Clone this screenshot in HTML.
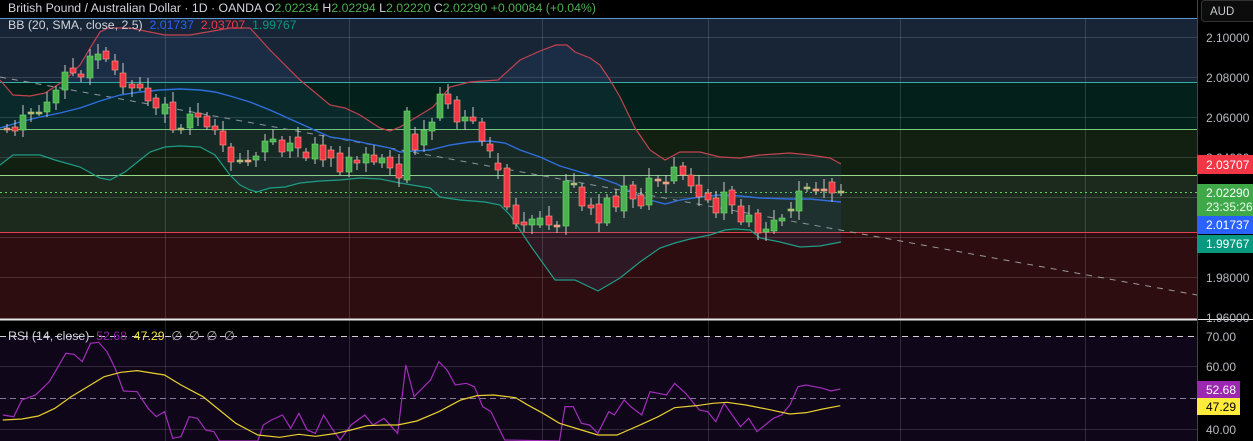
<!DOCTYPE html>
<html><head><meta charset="utf-8"><style>
html,body{margin:0;padding:0;background:#000;width:1253px;height:441px;overflow:hidden;font-family:"Liberation Sans",sans-serif}
svg{position:absolute;left:0;top:0}
</style></head><body>
<svg id="s" width="1253" height="441" xmlns="http://www.w3.org/2000/svg" font-family="Liberation Sans, sans-serif">
<rect x="0" y="0" width="1197" height="18" fill="#000"/>
<rect x="0" y="18" width="1197" height="64" fill="#172536"/>
<rect x="0" y="82" width="1197" height="47" fill="#04201a"/>
<rect x="0" y="129" width="1197" height="46" fill="#122012"/>
<rect x="0" y="175" width="1197" height="57" fill="#1c2a1e"/>
<rect x="0" y="232" width="1197" height="87" fill="#2d0d10"/>
<rect x="0" y="320" width="1197" height="16" fill="#000"/>
<rect x="0" y="336" width="1197" height="105" fill="#10061a"/>
<g stroke="#ffffff" stroke-opacity="0.14" stroke-width="1">
<line x1="0" y1="37.5" x2="1197" y2="37.5"/><line x1="0" y1="77.5" x2="1197" y2="77.5"/>
<line x1="0" y1="117.5" x2="1197" y2="117.5"/><line x1="0" y1="157.5" x2="1197" y2="157.5"/>
<line x1="0" y1="197.5" x2="1197" y2="197.5"/><line x1="0" y1="237.5" x2="1197" y2="237.5"/>
<line x1="0" y1="277.5" x2="1197" y2="277.5"/>
<line x1="0" y1="366.5" x2="1197" y2="366.5"/><line x1="0" y1="429.5" x2="1197" y2="429.5"/>
<line x1="165.5" y1="18" x2="165.5" y2="441"/><line x1="349.5" y1="18" x2="349.5" y2="441"/>
<line x1="542.5" y1="18" x2="542.5" y2="441"/><line x1="708.5" y1="18" x2="708.5" y2="441"/>
<line x1="900.5" y1="18" x2="900.5" y2="441"/><line x1="1085.5" y1="18" x2="1085.5" y2="441"/>
</g>
<line x1="0" y1="18.5" x2="1197" y2="18.5" stroke="#5a9ad0"/>
<line x1="0" y1="82.5" x2="1197" y2="82.5" stroke="#2fb3a8"/>
<line x1="0" y1="129.5" x2="1197" y2="129.5" stroke="#7ccf7a"/>
<line x1="0" y1="175.5" x2="1197" y2="175.5" stroke="#9ad98a"/>
<line x1="0" y1="232.5" x2="1197" y2="232.5" stroke="#e04050"/>
<line x1="0" y1="319.5" x2="1253" y2="319.5" stroke="#e8e8e8" stroke-width="2"/>
<line x1="0" y1="336.5" x2="1197" y2="336.5" stroke="#d0d0d0" stroke-dasharray="6,5"/>
<line x1="0" y1="398.5" x2="1197" y2="398.5" stroke="#8a7a9a" stroke-dasharray="6,4"/>
<line x1="0" y1="77" x2="1197" y2="295" stroke="#9a9a9a" stroke-dasharray="6,6"/>
<line x1="0" y1="192.5" x2="1197" y2="192.5" stroke="#5fd35f" stroke-dasharray="2,3"/>
<path id="band" fill="#3a6ab0" fill-opacity="0.12" stroke="none"/>
<polyline id="up" fill="none" stroke="#c24350" stroke-width="1.2"/>
<polyline id="mid" fill="none" stroke="#2f6fe0" stroke-width="1.4"/>
<polyline id="lo" fill="none" stroke="#1f9d87" stroke-width="1.2"/>
<g id="candles"></g>
<g transform="translate(0,315) scale(0.5485,0.3333)">
<polyline fill="none" stroke="#a22dbb" stroke-width="1.2" vector-effect="non-scaling-stroke" points="5,300 25,305 40,255 65,240 90,200 120,115 135,118 150,140 165,85 180,82 195,110 210,160 225,228 250,230 270,280 285,305 300,290 315,370 330,365 345,305 360,310 375,345 390,350 400,378 470,378 480,330 495,315 515,300 530,340 545,295 560,345 575,355 590,300 605,340 620,375 640,330 665,300 680,330 700,310 725,355 740,150 755,245 785,195 800,140 815,165 830,210 850,205 865,215 880,275 895,290 920,375 1020,378 1030,275 1045,275 1060,325 1075,330 1090,355 1110,290 1120,300 1138,255 1150,275 1170,300 1185,230 1215,240 1230,205 1250,235 1275,285 1290,290 1305,320 1320,265 1335,300 1350,335 1365,310 1380,350 1395,330 1410,310 1425,300 1440,270 1455,215 1470,210 1485,215 1500,220 1515,228 1532,222"/>
<polyline fill="none" stroke="#e8d030" stroke-width="1.2" vector-effect="non-scaling-stroke" points="5,315 40,312 70,303 100,280 130,245 160,215 190,185 220,172 250,167 300,180 330,210 370,245 400,285 430,325 470,360 510,367 545,358 575,364 610,356 640,345 670,332 700,330 725,330 760,318 800,290 840,255 870,242 900,240 940,248 960,268 990,295 1020,325 1060,345 1090,360 1125,360 1160,335 1200,305 1230,278 1270,272 1300,265 1325,262 1360,270 1400,283 1440,297 1470,293 1500,282 1532,272"/>
</g>
<rect x="1197" y="0" width="56" height="319" fill="#000"/>
<rect x="1197" y="320" width="56" height="121" fill="#000"/>
<line x1="1197.5" y1="0" x2="1197.5" y2="441" stroke="#444"/>
<rect x="1201.5" y="0.5" width="56" height="21" rx="3" fill="#0c0c0c" stroke="#333"/>
<text x="1210" y="15" font-size="11.5" fill="#c8cad0">AUD</text>
<g font-size="12" fill="#b8bac0">
<text x="1206" y="42">2.10000</text><text x="1206" y="82">2.08000</text><text x="1206" y="122">2.06000</text>
<text x="1206" y="162">2.04000</text><text x="1206" y="282">1.98000</text><text x="1206" y="322">1.96000</text>
<text x="1206" y="341">70.00</text><text x="1206" y="371">60.00</text><text x="1206" y="434">40.00</text>
</g>
<rect x="1197" y="155" width="56" height="19" fill="#f23645"/><text x="1206" y="169" font-size="12" fill="#fff">2.03707</text>
<rect x="1197" y="184" width="56" height="32" fill="#3fa94a"/><text x="1206" y="197" font-size="12" fill="#fff">2.02290</text><text x="1206" y="211" font-size="12" fill="#e8ffe8">23:35:26</text>
<rect x="1197" y="216" width="56" height="18" fill="#2962ff"/><text x="1206" y="229" font-size="12" fill="#fff">2.01737</text>
<rect x="1197" y="235" width="56" height="18" fill="#089981"/><text x="1206" y="248" font-size="12" fill="#fff">1.99767</text>
<rect x="1197" y="381" width="43" height="17" fill="#9c27b0"/><text x="1206" y="394" font-size="12" fill="#fff">52.68</text>
<rect x="1197" y="398" width="43" height="17" fill="#ffeb3b"/><text x="1206" y="411" font-size="12" fill="#000">47.29</text>
<text x="8" y="12" font-size="12.3" fill="#d1d4dc">British Pound / Australian Dollar · 1D · OANDA  O<tspan fill="#4caf50">2.02234</tspan>  H<tspan fill="#4caf50">2.02294</tspan>  L<tspan fill="#4caf50">2.02220</tspan>  C<tspan fill="#4caf50">2.02290</tspan>  <tspan fill="#4caf50">+0.00084 (+0.04%)</tspan></text>
<text x="8" y="29" font-size="12.3" fill="#d1d4dc" xml:space="preserve">BB (20, SMA, close, 2.5)  <tspan fill="#2962ff">2.01737</tspan>  <tspan fill="#f23645">2.03707</tspan>  <tspan fill="#089981">1.99767</tspan></text>
<text x="8" y="340" font-size="12.3" fill="#d1d4dc" xml:space="preserve">RSI (14, close)  <tspan fill="#8e24aa">52.68</tspan>  <tspan fill="#f0e040">47.29</tspan>  <tspan fill="#bbb">∅  ∅  ∅  ∅</tspan></text>
</svg>
<script>
var up=[[0,80],[13,95],[30,96],[45,93],[65,80],[80,65],[92,45],[100,32],[108,28],[130,28],[165,35],[190,35],[230,28],[250,28],[270,50],[300,80],[330,105],[345,108],[360,115],[380,128],[390,131],[400,127],[420,115],[433,107],[450,87],[470,82],[498,80],[520,60],[540,51],[556,45],[567,45],[575,52],[590,58],[600,65],[610,80],[620,97],[635,128],[650,150],[665,160],[680,152],[700,152],[720,157],[740,158],[760,155],[790,153],[810,155],[830,158],[841,164]];
var mid=[[0,128],[20,122],[40,117],[60,113],[80,108],[100,101],[120,95],[140,92],[160,90],[180,89],[200,90],[215,92],[230,96],[250,102],[270,110],[290,119],[310,128],[330,137],[350,140],[370,144],[390,148],[400,152],[430,150],[450,145],[470,142],[490,141],[505,143],[520,150],[540,157],[560,166],[580,172],[600,178],[617,184],[633,193],[650,200],[665,204],[680,200],[700,197],[720,195],[740,196],[760,198],[790,199],[810,199],[841,202]];
var lo=[[0,165],[13,155],[40,155],[55,160],[80,167],[100,178],[110,180],[125,172],[140,160],[150,152],[165,147],[180,146],[200,147],[215,155],[230,175],[240,185],[250,190],[257,192],[270,188],[285,187],[300,183],[320,181],[340,180],[360,178],[380,179],[400,183],[430,188],[440,197],[460,200],[485,202],[500,205],[510,215],[530,245],[555,280],[575,280],[598,291],[620,278],[640,262],[660,248],[675,243],[690,239],[710,235],[725,230],[735,229],[750,230],[760,238],[780,242],[800,247],[820,246],[841,242]];
function pts(a){return a.map(function(p){return p.join(',')}).join(' ')}
document.getElementById('up').setAttribute('points',pts(up));
document.getElementById('mid').setAttribute('points',pts(mid));
document.getElementById('lo').setAttribute('points',pts(lo));
document.getElementById('band').setAttribute('d','M'+pts(up)+' L'+pts(lo.slice().reverse())+'Z');
var c=[[7,128,130,0],[15,127,131,0],[23,115,130,1],[31,112,113,1],[39,112,113,1],[47,102,112,1],[56,90,103,1],[65,72,90,1],[73,68,73,0],[81,74,77,0],[90,56,78,1],[98,54,60,1],[106,51,59,0],[115,61,70,0],[123,73,87,0],[132,84,88,0],[140,84,88,0],[148,88,101,0],[156,98,108,0],[165,104,114,1],[173,102,130,0],[181,128,129,1],[190,114,128,1],[198,113,117,0],[207,116,127,0],[215,126,130,0],[223,131,145,0],[231,147,162,0],[240,160,161,1],[248,160,161,0],[256,156,160,1],[265,141,152,1],[273,139,142,1],[282,140,152,0],[290,143,151,1],[298,137,148,0],[306,152,158,0],[315,144,159,1],[323,145,160,0],[331,150,158,0],[340,153,172,0],[349,157,172,1],[357,160,163,0],[366,154,163,1],[374,155,162,0],[382,158,163,1],[390,157,168,0],[399,164,178,0],[407,111,180,1],[415,134,150,0],[424,130,145,1],[432,122,131,1],[440,94,118,1],[448,94,104,0],[457,100,122,0],[465,117,121,1],[473,117,121,0],[482,122,141,0],[490,144,151,0],[498,163,170,0],[507,168,207,0],[516,205,224,0],[524,222,225,0],[532,219,225,1],[540,218,225,1],[549,216,225,0],[557,225,226,0],[566,181,226,1],[574,183,185,1],[582,187,206,0],[591,205,208,0],[599,204,223,0],[607,198,223,1],[616,196,207,0],[624,186,211,1],[633,185,199,0],[641,195,206,0],[649,178,205,1],[658,179,180,0],[666,182,183,0],[674,167,181,1],[683,166,175,0],[691,175,186,0],[699,185,197,0],[708,193,200,0],[716,198,213,0],[724,192,213,1],[732,190,205,0],[741,206,222,0],[749,215,222,1],[758,213,233,0],[766,229,232,1],[774,220,231,1],[782,218,221,1],[791,209,211,1],[799,191,211,1],[807,187,189,1],[816,189,190,0],[824,189,191,0],[832,182,193,0],[841,191,193,1]];
var h='';
c.forEach(function(k,i){var col=k[3]?'#4caf50':'#f23645';var st=k[3]?'#6fe06f':'#f6a088';var wt=k[1]-4-(i%3)*3,wb=k[2]+3+(i%4)*2;
if(k[2]-k[1]<3){col='#e9a080';}
h+='<line x1="'+k[0]+'" y1="'+wt+'" x2="'+k[0]+'" y2="'+wb+'" stroke="#c8c8c8" stroke-width="1"/>';
h+='<rect x="'+(k[0]-3)+'" y="'+k[1]+'" width="6" height="'+Math.max(2,k[2]-k[1])+'" fill="'+col+'" stroke="'+st+'" stroke-width="0.6"/>';});
document.getElementById('candles').innerHTML=h;
</script>
</body></html>
